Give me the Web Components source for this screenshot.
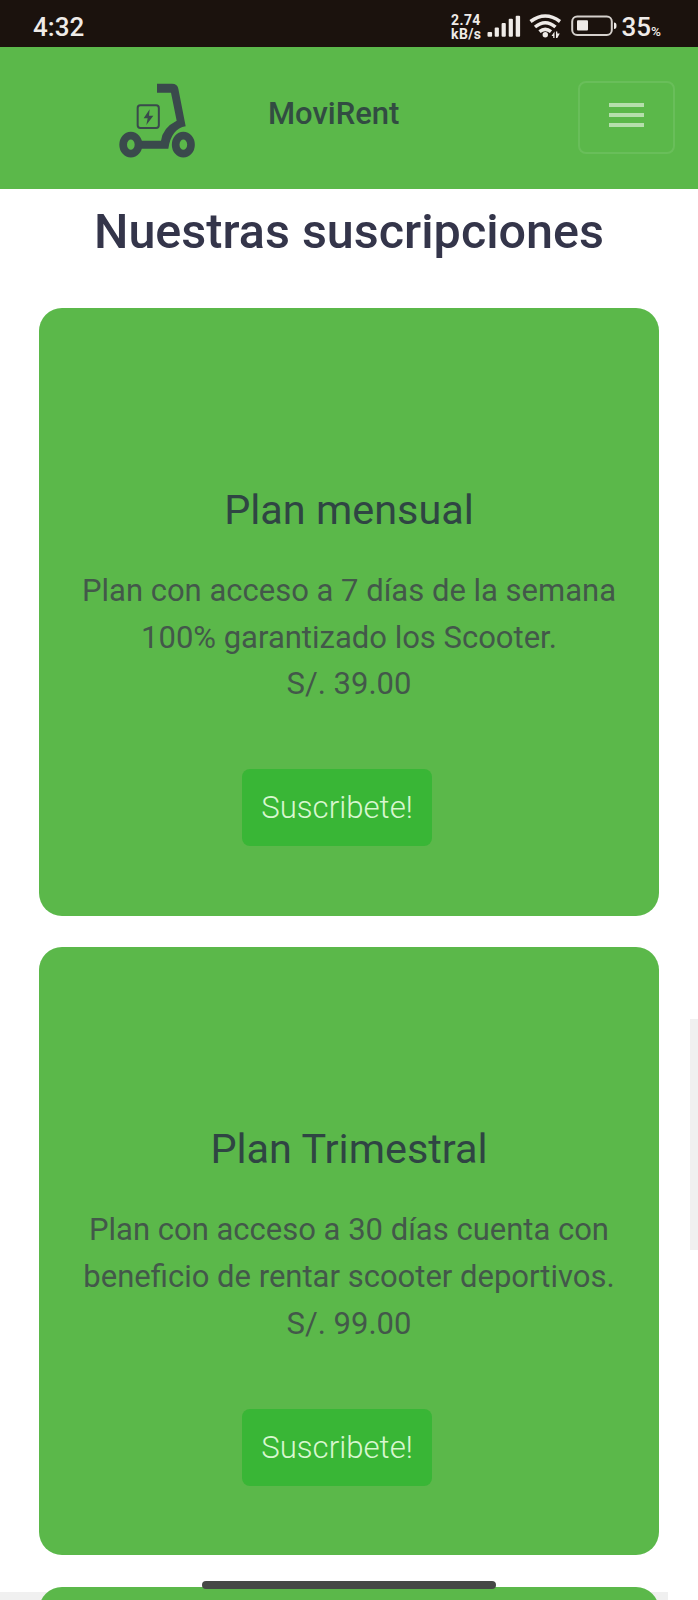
<!DOCTYPE html>
<html lang="es">
<head>
<meta charset="utf-8">
<title>MoviRent</title>
<style>
html,body{margin:0;background:#fff;overflow:hidden}
body{width:698px;height:1600px;font-family:Roboto,sans-serif}
</style>
</head>
<body>
<movi-app></movi-app>
<script>
const define = (name, html) => customElements.define(name, class extends HTMLElement {
  constructor() {
    super();
    this.attachShadow({ mode: 'open' }).innerHTML = html;
  }
});

define('status-bar', `
<style>
:host{display:flex;height:47px;background:#1b120d;color:#efebe8;box-sizing:border-box;padding:0 37px 0 33px;align-items:center;line-height:1}
.time{font-size:26px;font-weight:500;flex:1;padding-top:7px}
.rate{font-size:14px;font-weight:700;line-height:14px;padding-top:7px;width:35px;white-space:nowrap;letter-spacing:.4px}
.rate span{display:block}
svg{display:block;width:135px;height:47px;flex:none}
.pct{display:flex;align-items:baseline;justify-content:flex-end;font-size:26px;font-weight:500;padding-top:7px;white-space:nowrap;width:40px}
.pct small{font-size:13.500px;font-weight:500}
</style>
<div class="time">4:32</div>
<div class="rate"><span>2.74</span><span>kB/s</span></div>
<svg viewBox="486 0 135 47" fill="#efebe8">
  <rect x="487.500" y="32" width="4.600" height="4.800" rx="1"/><rect x="494.700" y="27.500" width="4.200" height="9.300" rx="1"/><rect x="501.600" y="23" width="4.200" height="13.800" rx="1"/><rect x="508.700" y="18.700" width="4.200" height="18.100" rx="1"/><rect x="515.700" y="15.700" width="4.400" height="21.100" rx="1"/>
  <g fill="none" stroke="#efebe8" stroke-width="3.500"><path d="M530.500 21.500Q545.300 10.500 560 21.500"/><path d="M535 27Q545.300 18.500 555.500 27"/><path d="M539.500 31.700Q545.300 27 551 31.700"/></g>
  <circle cx="545.300" cy="34.700" r="2.700"/>
  <path d="M551.500 36l3-4.500v6.500h-1.300V36zM556 38v-6.500h1.300V33.500h2.500l-2.500 4.500z"/>
  <rect x="572.200" y="16.500" width="39.600" height="18.600" rx="5" fill="none" stroke="#d5d0cc" stroke-width="2"/>
  <rect x="577" y="20.200" width="11" height="10.300" rx="1"/>
  <path d="M614 22.500q2.500 0 2.500 3.200T614 29z"/>
</svg>
<div class="pct">35<small>%</small></div>
`);

define('scooter-logo', `
<style>:host{display:block;width:80px;height:80px}svg{display:block}</style>
<svg width="80" height="80" viewBox="54 34 240 240" fill="#3a4a4c">
  <path d="M171 42H216Q232 42 235 57L257 170Q214 177 205 237H122V213H183Q188 174 230 153L213 69H171Z"/>
  <g fill="none" stroke="#3a4a4c"><ellipse cx="92.500" cy="225" rx="23" ry="27" stroke-width="23"/><ellipse cx="250" cy="225" rx="23" ry="27" stroke-width="23"/>
  <rect x="113" y="107" width="63.500" height="68" rx="8" stroke-width="6"/></g>
  <path d="M149 119L131 146H143L139 166L160 138H147Z"/>
</svg>`);

define('menu-toggle', `
<style>
:host{display:flex;flex-direction:column;gap:6px;align-items:center;justify-content:center;box-sizing:border-box;width:97px;height:73px;border:2px solid rgba(255,255,255,.09);border-radius:8px;padding-bottom:6px}
i{display:block;width:35px;height:4px;background:#b5dfac}
</style><i></i><i></i><i></i>`);

define('nav-bar', `
<style>
:host{display:flex;height:142px;background:#5bb84a;box-sizing:border-box;padding:0 23px 0 118px;align-items:flex-start}
scooter-logo{margin-top:34px}
.brand{margin:48px 0 0 70px;font-size:31px;line-height:38px;font-weight:500;color:#324c42;flex:1;white-space:nowrap}
menu-toggle{margin-top:34px}
</style>
<scooter-logo></scooter-logo><div class="brand"><slot></slot></div><menu-toggle></menu-toggle>`);

define('plan-card', `
<style>
:host{display:block;height:608px;flex:none;box-sizing:border-box;background:#5bb84a;border-radius:23px;padding-top:178px;text-align:center}
.title{font-size:41.400px;line-height:48px;color:#2f4543}
.text{margin-top:34px;font-size:31px;line-height:46.600px;color:#43584a;white-space:nowrap}
::slotted([slot=action]){margin:61.700px 227px 0 203px}
</style>
<div class="title"><slot name="title"></slot></div>
<div class="text"><slot></slot></div>
<slot name="action"></slot>`);

define('plan-button', `
<style>:host{display:block;height:77px;line-height:77px;border-radius:8px;background:#39b636;color:#d8f7d0;font-size:31.200px;font-weight:300;text-align:center}</style><slot></slot>`);

define('movi-app', `
<style>
:host{display:block;position:relative;width:698px;height:1600px;overflow:hidden;background:#fff}
h1{margin:15px 0 0;height:104px;font-size:48.500px;line-height:56px;font-weight:500;color:#34354a;text-align:center;white-space:nowrap}
main{display:flex;flex-direction:column;gap:31.400px;padding:0 39px;position:relative}
.v{position:absolute;left:690px;top:1019px;width:8px;height:231px;background:#f0f0f0}
.h{position:absolute;left:0;top:1592px;width:668px;height:8px;background:#f0f0f0}
.home{position:absolute;left:202px;top:1581px;width:294px;height:8px;border-radius:4px;background:#464846}
</style>
<status-bar></status-bar>
<nav-bar>MoviRent</nav-bar>
<h1>Nuestras suscripciones</h1>
<div class="h"></div>
<main>
<plan-card><span slot="title">Plan mensual</span><div>Plan con acceso a 7 días de la semana</div><div>100% garantizado los Scooter.</div><div>S/. 39.00</div><plan-button slot="action">Suscribete!</plan-button></plan-card>
<plan-card><span slot="title">Plan Trimestral</span><div>Plan con acceso a 30 días cuenta con</div><div>beneficio de rentar scooter deportivos.</div><div>S/. 99.00</div><plan-button slot="action">Suscribete!</plan-button></plan-card>
<plan-card></plan-card>
</main>
<div class="v"></div>
<div class="home"></div>`);
</script>
</body>
</html>
